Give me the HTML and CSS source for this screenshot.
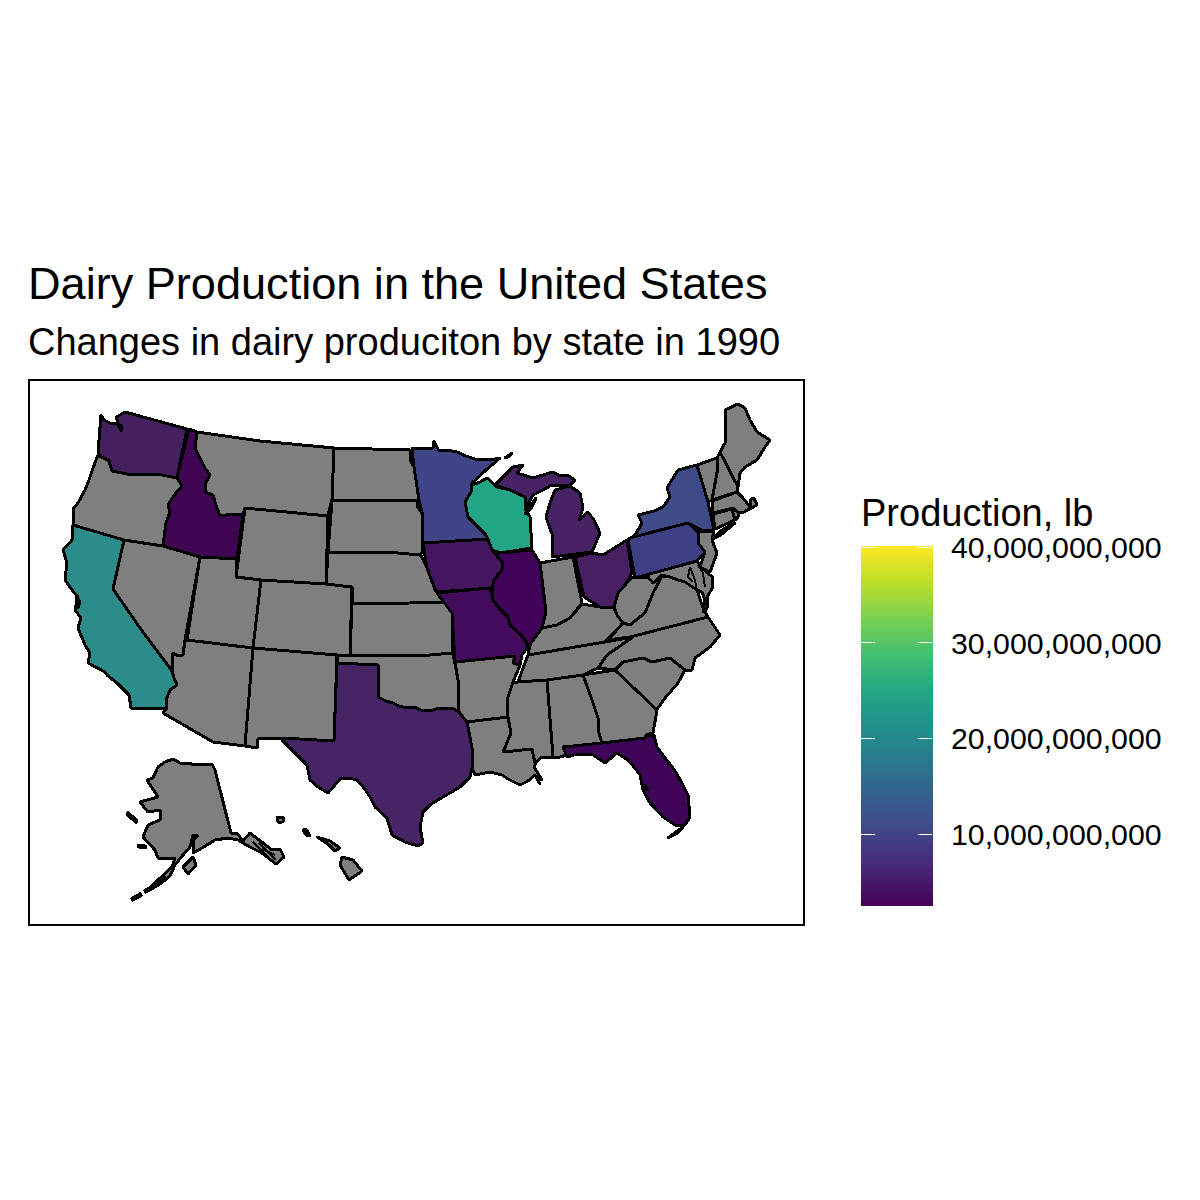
FILE: index.html
```html
<!DOCTYPE html>
<html lang="en">
<head>
<meta charset="utf-8">
<title>Dairy Production in the United States</title>
<link rel="stylesheet" href="styles.css">
</head>
<body>
<main class="figure">
  <section class="chart">
    <h1 class="title">Dairy Production in the United States</h1>
    <h2 class="subtitle">Changes in dairy produciton by state in 1990</h2>
    <div class="panel">
      <svg class="map" viewBox="30 381 773 543" role="img" aria-label="Map of US states">
        <path class="wa" d="M101 415L104 420 110 423 116 424 118 422 116 417 120 415 125 412 187 429 177 478 157 474 140 475 127 474 112 471 109 460 101 457 98 453Z M118 424L121 431 122 426Z"/>
        <path d="M98 455L109 461 112 471 127 474 140 475 157 474 177 478 182 486 175 494 168 505 170 512 166 523 163 546 124 540 73 525 73 509 78 503 85 490 89 480 93 468Z"/>
        <path class="ca" d="M73 525L124 540 113 589 140 628 172 671 174 678 177 685 170 690 166 700 167 708 131 708 129 695 124 690 117 683 107 675 105 672 88 663 90 653 85 645 78 628 81 618 75 610 78 597 72 590 65 580 67 563 63 550 72 540Z M77 596L80 602 78 608 76 602Z"/>
        <path d="M124 540L163 546 200 557 185 640 183 655 178 656 173 653 172 671 140 628 113 589Z"/>
        <path class="id" d="M189 429L197 432 195 448 200 458 205 468 210 475 205 484 205 492 213 495 216 505 220 516 232 514 243 514 237 559 200 557 163 546 166 523 170 512 168 505 175 494 182 486 177 478Z"/>
        <path d="M197 432L260 441 334 448 332 499 328 516 245 508 243 514 232 514 220 516 216 505 213 495 205 492 205 484 210 475 205 468 200 458 195 448Z"/>
        <path d="M245 508L328 516 326 584 261 580 236 577Z"/>
        <path d="M200 557L237 559 236 577 261 580 253 648 187 640Z"/>
        <path d="M261 580L326 584 352 587 350 655 337 655 253 648Z"/>
        <path d="M187 640L253 648 245 746 213 742 163 713 167 708 166 700 170 690 177 685 174 678 172 671 173 653 178 656 183 655 185 640Z"/>
        <path d="M253 648L337 655 334 741 282 738 258 739 257 748 245 746Z"/>
        <path class="tx" d="M337 663L378 665 378 697 386 701 393 703 399 706 407 708 414 707 421 710 430 711 436 709 445 708 454 709 459 712 467 712 467 722 470 735 473 753 472 768 470 777 460 787 443 797 431 804 423 812 420 827 423 843 418 846 405 842 392 835 387 818 375 807 370 797 364 788 357 780 349 778 340 779 334 786 328 793 318 787 310 780 307 765 295 753 282 740 282 738 334 741Z"/>
        <path d="M338 655L430 655 453 653 458 680 459 712 454 709 445 708 436 709 430 711 421 710 414 707 407 708 399 706 393 703 386 701 378 697 378 665 337 663Z"/>
        <path d="M352 604L410 603 444 602 452 613 453 653 430 655 350 655Z"/>
        <path d="M328 552L398 553 420 555 422 557 427 568 436 591 439 596 444 602 410 603 352 604 352 587 326 584Z"/>
        <path d="M332 500L418 501 417 506 422 513 422 552 420 555 398 553 328 552Z"/>
        <path d="M334 448L410 450 411 462 414 467 418 483 420 500 332 500Z"/>
        <path class="mn" d="M412 448L433 448 434 441 439 451 447 450 457 452 466 456 475 459 490 460 500 458 486 470 472 483 471 492 465 502 468 517 486 535 488 539 423 543 422 512 419 500 414 467Z"/>
        <path class="ia" d="M423 543L488 539 492 550 503 563 502 570 494 580 492 588 436 592 427 568Z"/>
        <path class="mo" d="M437 593L490 588 493 600 499 608 508 617 510 625 523 637 528 647 522 655 520 665 513 663 515 656 455 662 452 613Z"/>
        <path d="M455 662L515 656 513 663 520 665 513 682 507 700 508 717 467 722 459 712 458 680Z"/>
        <path d="M467 722L508 717 511 733 503 752 532 749 536 763 534 767 542 780 536 777 540 784 535 775 528 781 520 785 508 779 502 775 490 772 475 775 472 768 473 753Z"/>
        <path d="M518 682L547 680 553 757 542 757 535 763 532 749 503 752 511 733 508 717 507 700 513 682Z"/>
        <path d="M547 680L583 675 591 697 598 718 598 730 603 743 563 747 567 755 557 758 553 757Z"/>
        <path d="M583 675L615 670 636 690 657 710 653 733 646 735 645 738 602 743 598 730 598 718 591 697Z"/>
        <path class="fl" d="M563 747L602 743 645 738 647 735 654 735 657 747 665 758 673 768 681 781 688 795 690 817 685 825 675 825 663 817 655 808 650 803 643 790 640 775 634 767 628 760 617 753 605 763 593 755 578 754 567 757Z M645 785L648 790 645 789Z"/>
        <path class="fl" d="M668 838L676 832 683 827 676 834Z"/>
        <path d="M615 670L623 662 643 658 652 662 670 658 685 670 678 683 665 698 658 708 657 710Z"/>
        <path d="M598 668L607 655 630 637 708 617 720 635 710 647 695 658 692 670 685 670 670 658 652 662 643 658 623 662 615 670Z"/>
        <path d="M518 682L528 655 605 642 633 637 607 655 598 668 583 675 547 680Z"/>
        <path d="M528 653L531 643 542 628 557 625 570 618 582 604 600 607 612 605 617 615 623 623 607 640 605 642 528 655Z"/>
        <path d="M540 563L573 557 582 603 570 618 557 625 542 628 546 612 543 587Z"/>
        <path class="il" d="M500 553L532 550 540 563 543 587 546 612 542 628 531 643 528 645 523 637 510 625 508 617 499 608 493 600 492 588 494 580 502 570 503 563 492 550Z"/>
        <path class="wi" d="M472 485L480 482 487 478 497 487 510 490 525 497 526 505 527 512 530 517 532 548 500 553 492 550 488 539 486 535 468 517 465 502 471 492Z"/>
        <path class="mi" d="M495 485L513 467 523 465 517 473 533 478 553 472 560 476 567 475 575 480 570 485 550 486 543 490 533 495 525 510 525 497 510 490Z"/>
        <path class="mi" d="M555 490L570 486 580 493 583 508 579 520 588 512 594 520 600 533 592 552 552 557 553 537 546 517 550 503Z"/>
        <path class="oh" d="M575 557L592 553 603 555 627 540 632 573 625 585 618 593 615 607 600 607 584 597Z"/>
        <path d="M614 607L618 593 625 585 632 577 635 578 648 577 653 583 662 575 670 577 653 593 645 613 630 625 623 623 617 615Z"/>
        <path d="M608 640L623 623 630 625 645 613 653 593 662 576 670 577 678 580 685 582 697 590 703 608 708 617 630 637Z"/>
        <path d="M635 578L697 561 705 570 708 574 712 576 713 587 707 597 707 608 703 612 705 600 702 592 697 590 685 582 678 580 670 577 662 575 653 583 648 577Z"/>
        <path class="line" d="M690 567L695 580 697 590 M690 567L688 577 693 582 M698 565L703 573 705 587"/>
        <path class="pa" d="M628 539L633 537 688 523 698 532 698 543 705 552 697 561 635 578Z"/>
        <path class="ny" d="M635 535L642 523 638 515 654 511 663 507 670 497 667 488 678 470 697 465 708 502 714 530 703 531 688 523 633 537Z"/>
        <path class="ny" d="M711 540L722 530 735 523 722 534Z"/>
        <path d="M698 532L703 531 714 531 712 540 717 553 710 572 700 567 705 552 698 543Z"/>
        <path d="M697 465L717 458 718 467 712 500 708 502Z"/>
        <path d="M717 458L720 452 738 487 737 492 712 500 718 467Z"/>
        <path d="M720 452L725 443 725 410 738 404 745 408 750 420 757 432 770 440 765 447 757 460 745 467 740 473 738 487Z"/>
        <path d="M712 501L737 492 743 498 750 507 751 499 754 498 757 505 744 512 738 512 733 508 713 513Z"/>
        <path d="M713 514L732 509 735 520 715 529Z"/>
        <path d="M732 509L738 512 738 517 735 520Z"/>
        <path d="M158 767L165 762 173 759 180 763 185 763 198 765 212 764 215 770 231 833 237 833 243 841 250 833 263 843 272 850 280 849 284 857 276 864 262 853 250 847 238 840 228 838 215 840 202 848 193 853 193 840 198 836 193 835 190 847 183 855 175 865 170 876 160 884 145 892 158 880 172 867 175 858 158 858 155 850 143 837 148 825 160 820 160 810 148 812 140 802 158 797 147 780 153 778Z"/>
        <path class="line" d="M253 842L268 857 M259 843L276 860 M262 849L275 855"/>
        <path class="line thick" d="M146 891L158 884 165 879"/>
        <path d="M183 867L193 857 196 865 188 874Z"/>
        <path class="line thick" d="M128 814L136 821"/>
        <path class="line thick" d="M139 846L145 847"/>
        <path class="line thick" d="M133 899L140 895"/>
        <path d="M277 817L283 817 284 821 280 823 277 821Z"/>
        <path d="M303 830L306 829 310 836 306 835Z"/>
        <path d="M317 837L330 841 340 848 335 851 328 844Z"/>
        <path d="M342 857L353 860 362 871 349 880 340 865Z"/>
        <path d="M505 458L512 453 508 457Z"/>
        <path d="M525 514L531 505 536 498 532 507Z"/>
      </svg>
    </div>
  </section>
  <aside class="legend">
    <h3 class="legend-title">Production, lb</h3>
    <div class="legend-body">
      <div class="bar">
        <span class="tick t40 left"></span><span class="tick t40 right"></span>
        <span class="tick t30 left"></span><span class="tick t30 right"></span>
        <span class="tick t20 left"></span><span class="tick t20 right"></span>
        <span class="tick t10 left"></span><span class="tick t10 right"></span>
      </div>
      <ul class="labels">
        <li>40,000,000,000</li>
        <li>30,000,000,000</li>
        <li>20,000,000,000</li>
        <li>10,000,000,000</li>
      </ul>
    </div>
  </aside>
</main>
</body>
</html>
```
FILE: styles.css
```css
* { box-sizing: border-box; }
html, body { margin: 0; padding: 0; background: #fff; }
body { width: 1200px; height: 1200px; font-family: "Liberation Sans", Arial, sans-serif; color: #000; overflow: hidden; }
.figure { display: flex; padding: 258px 0 0 28px; }
.chart { width: 777px; }
.title { margin: 0; font-size: 45.1px; font-weight: 400; line-height: 52px; white-space: nowrap; }
.subtitle { margin: 11px 0 0; font-size: 38px; font-weight: 400; line-height: 42px; white-space: nowrap; }
.panel { margin-top: 16px; width: 777px; height: 547px; border: 2px solid #000; }
.map { display: block; width: 100%; height: 100%; }
.map path { fill: #7f7f7f; stroke: #000; stroke-width: 3; stroke-linejoin: round; shape-rendering: crispEdges; }
.map .line { fill: none; stroke-width: 2; }
.map .thick { stroke-width: 5; stroke-linecap: round; }
.map .wa { fill: #45205f; }
.map .ca { fill: #2b8c89; }
.map .id { fill: #3e0653; }
.map .tx { fill: #472466; }
.map .mn { fill: #3f4587; }
.map .ia { fill: #451660; }
.map .mo { fill: #420b5b; }
.map .il { fill: #42045a; }
.map .wi { fill: #21a585; }
.map .mi { fill: #472265; }
.map .oh { fill: #471f62; }
.map .pa { fill: #3e3f85; }
.map .ny { fill: #3f4b87; }
.map .fl { fill: #3f0558; }
.legend { margin: 234px 0 0 56px; }
.legend-title { margin: 0; font-size: 38px; font-weight: 400; line-height: 42px; white-space: nowrap; }
.legend-body { display: flex; margin-top: 12px; }
.bar { position: relative; width: 72px; height: 360px; background: linear-gradient(to top, #440154 0%, #482475 10%, #414487 20%, #355f8d 30%, #2a788e 40%, #21918c 50%, #22a884 60%, #44bf70 70%, #7ad151 80%, #bddf26 90%, #fde725 100%); }
.tick { position: absolute; width: 14px; height: 1px; background: #fff; }
.left { left: 0; }
.right { right: 1px; }
.t40 { top: 1px; }
.t30 { top: 96px; }
.t20 { top: 192px; }
.t10 { top: 288px; }
.labels { list-style: none; margin: -16px 0 0 18px; padding: 0; display: flex; flex-direction: column; gap: 59.7px; }
.labels li { font-size: 30.3px; line-height: 36px; white-space: nowrap; }
```
